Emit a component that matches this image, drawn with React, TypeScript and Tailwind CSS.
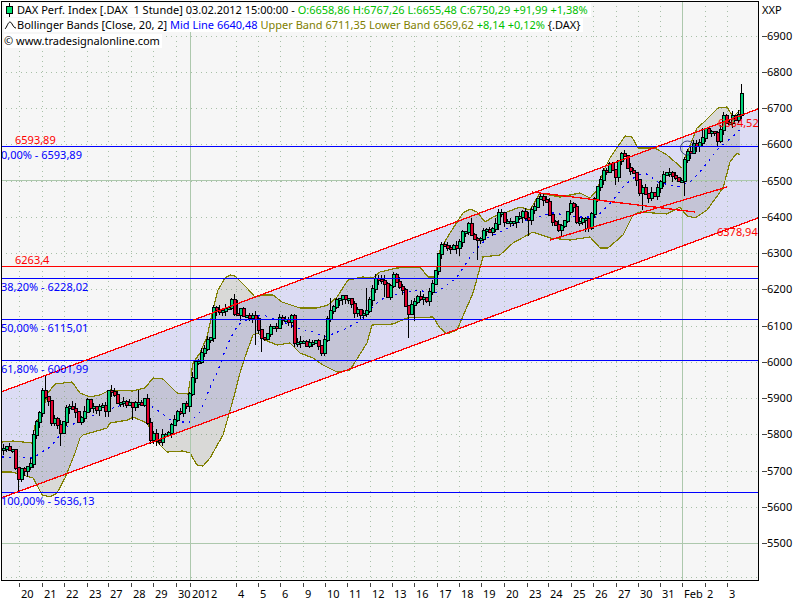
type Pt = [number, number];

const LEFT = 1;
const RIGHT = 758;
const TOP = 1;
const BOTTOM = 580;

// closes read off the chart, in pixels
const CLOSES: Pt[] = [
  [3, 450], [8, 448], [12, 447], [15, 467], [17, 478], [19, 483], [22, 467], [27, 465], [30, 462], [33, 437], [35, 425],
  [38, 420], [42, 392], [45, 398], [48, 403], [51, 420], [55, 422], [59, 432], [62, 433], [64, 420], [67, 405], [70, 412],
  [75, 413], [78, 418], [83, 417], [86, 397], [88, 407], [93, 408], [100, 410], [107, 407], [108, 393], [113, 393], [117, 400],
  [125, 400], [132, 410], [137, 400], [145, 402], [147, 420], [149, 440], [153, 438], [160, 438], [167, 437], [171, 428],
  [175, 412], [180, 412], [185, 403], [188, 400], [191, 383], [193, 365], [198, 360], [200, 352], [205, 347], [210, 335],
  [213, 312], [218, 307], [223, 315], [230, 302], [235, 312], [240, 312], [245, 318], [250, 313], [257, 320], [258, 333],
  [263, 338], [268, 337], [271, 323], [277, 328], [280, 315], [287, 317], [292, 320], [295, 350], [300, 342], [308, 345],
  [315, 340], [321, 357], [327, 320], [330, 307], [338, 300], [350, 300], [355, 313], [363, 312], [368, 307], [373, 283],
  [378, 276], [383, 285], [388, 300], [393, 277], [398, 287], [403, 292], [407, 317], [413, 300], [422, 302], [428, 300],
  [432, 285], [438, 253], [442, 243], [447, 245], [452, 250], [457, 245], [463, 230], [468, 228], [473, 242], [482, 233],
  [485, 228], [492, 228], [497, 218], [502, 213], [505, 223], [513, 225], [518, 213], [523, 213], [527, 223], [532, 210],
  [535, 203], [542, 197], [547, 202], [550, 223], [557, 232], [563, 228], [568, 212], [572, 202], [577, 223], [583, 222],
  [588, 225], [592, 210], [595, 190], [598, 180], [600, 177], [605, 173], [610, 163], [615, 177], [620, 156], [623, 157],
  [628, 170], [632, 177], [635, 175], [638, 192], [645, 192], [650, 197], [659, 187], [663, 175], [670, 178], [675, 177],
  [678, 182], [682, 185], [684, 163], [688, 150], [693, 147], [700, 143], [702, 137], [706, 132], [712, 137], [717, 137],
  [720, 128], [723, 118], [728, 125], [733, 117], [737, 123], [740, 90],
];

const UPPER: Pt[] = [
  [2, 442], [13, 441], [32, 443], [35, 425], [42, 412], [48, 393], [55, 384], [72, 382], [80, 393], [90, 397], [100, 395],
  [110, 390], [133, 391], [145, 388], [153, 378], [163, 379], [177, 393], [188, 394], [193, 363], [200, 353], [207, 337],
  [213, 310], [218, 290], [225, 278], [230, 275], [235, 276], [247, 288], [255, 297], [265, 295], [273, 295], [282, 302],
  [300, 308], [317, 308], [328, 305], [337, 297], [348, 280], [363, 277], [373, 278], [380, 272], [397, 268], [420, 267],
  [428, 277], [435, 277], [440, 250], [450, 233], [463, 213], [470, 209], [477, 212], [485, 222], [493, 217], [507, 212],
  [520, 207], [530, 210], [540, 193], [560, 197], [580, 193], [590, 198], [597, 190], [603, 172], [610, 158], [625, 136],
  [632, 137], [638, 148], [655, 148], [667, 155], [682, 168], [683, 163], [697, 128], [703, 123], [718, 108], [727, 107],
  [733, 117], [740, 110],
];

const LOWER: Pt[] = [
  [2, 472], [12, 472], [33, 478], [37, 485], [42, 495], [50, 497], [57, 493], [65, 478], [75, 453], [80, 438], [83, 435],
  [107, 428], [110, 423], [128, 420], [133, 417], [147, 423], [158, 443], [167, 452], [183, 451], [190, 453], [197, 465],
  [203, 466], [210, 458], [223, 435], [233, 400], [240, 373], [245, 357], [253, 335], [258, 333], [265, 340], [277, 345],
  [290, 343], [300, 353], [313, 358], [323, 365], [337, 372], [350, 370], [367, 343], [372, 325], [393, 324], [407, 318],
  [433, 317], [440, 328], [447, 334], [457, 330], [473, 293], [483, 257], [500, 255], [513, 243], [533, 232], [550, 238],
  [570, 240], [590, 237], [600, 248], [608, 248], [623, 235], [633, 215], [640, 212], [653, 213], [667, 214], [680, 207],
  [687, 216], [695, 218], [707, 210], [723, 188], [730, 162], [737, 153], [740, 155],
];

const MID: Pt[] = [
  [2, 457], [33, 458], [50, 447], [67, 427], [87, 418], [107, 410], [128, 403], [147, 403], [160, 412], [173, 422], [190, 422],
  [200, 412], [210, 388], [217, 373], [228, 343], [238, 325], [250, 318], [263, 315], [278, 320], [297, 328], [313, 332],
  [325, 337], [343, 330], [358, 322], [380, 300], [400, 293], [420, 290], [432, 295], [447, 285], [457, 277], [473, 253],
  [487, 238], [500, 232], [520, 222], [537, 217], [553, 213], [577, 217], [597, 217], [613, 200], [623, 187], [637, 175],
  [647, 174], [658, 182], [677, 187], [690, 182], [700, 172], [717, 150], [740, 130],
];

// long wicks that stand out in the picture: x, y of the tip
const WICKS: Pt[] = [
  [19, 492], [46, 375], [60, 446], [99, 416], [131, 420], [137, 390], [155, 446], [191, 372], [237, 300], [256, 345],
  [262, 352], [330, 298], [366, 288], [383, 297], [409, 338], [414, 321], [437, 265], [459, 256], [476, 260], [481, 243],
  [527, 236], [560, 236], [584, 232], [595, 198], [615, 185], [642, 210], [684, 196], [703, 128], [740, 84],
];

function at(points: Pt[], x: number) {
  for (let i = 1; i < points.length; i++) {
    if (x <= points[i][0]) {
      const [x0, y0] = points[i - 1];
      const [x1, y1] = points[i];
      return y0 + ((y1 - y0) * (x - x0)) / (x1 - x0 || 1);
    }
  }
  return points[points.length - 1][1];
}

const noise = (i: number) => {
  const v = Math.sin(i * 12.9898 + 4.1) * 43758.5453;
  return v - Math.floor(v);
};

type Candle = { x: number; top: number; bottom: number; high: number; low: number; up: boolean };

function buildCandles(): Candle[] {
  const out: Candle[] = [];
  let prev = CLOSES[0][1];
  for (let i = 0; i < 247; i++) {
    const xf = 3 + i * 3;
    const close = Math.round(at(CLOSES, xf) + (noise(i) - 0.5) * 9);
    const top = Math.min(prev, close);
    const bottom = Math.max(prev, close);
    let high = top - Math.round(noise(i + 500) * 6);
    let low = bottom + Math.round(noise(i + 900) * 6);
    for (const [wx, wy] of WICKS) {
      if (Math.abs(wx - xf) < 1.6) {
        if (wy < top) high = Math.min(high, wy);
        else low = Math.max(low, wy);
      }
    }
    out.push({ x: xf, top, bottom: Math.max(bottom, top + 1), high, low, up: close <= prev });
    prev = close;
  }
  return out;
}

const candles = buildCandles();

const pts = (list: Pt[]) => list.map(([x, y]) => `${x},${y}`).join(" ");
const yOf = (p: number) => Math.round(543 - (p - 5500) * 0.3624);

const PRICES = [6900, 6800, 6700, 6600, 6500, 6400, 6300, 6200, 6100, 6000, 5900, 5800, 5700, 5600, 5500];

const DAY_TICKS: [number, string][] = [
  [19, "20"], [42, "21"], [64, "22"], [87, "23"], [108, "27"], [131, "28"], [153, "29"], [176, "30"], [190, "2012"],
  [236, "4"], [258, "5"], [280, "6"], [303, "9"], [325, "10"], [347, "11"], [370, "12"], [392, "13"], [414, "16"],
  [437, "17"], [459, "18"], [481, "19"], [504, "20"], [527, "23"], [548, "24"], [571, "25"], [593, "26"], [616, "27"],
  [638, "30"], [660, "31"], [682, "Feb"], [705, "2"], [727, "3"],
];

const FIB_LINES: { y: number; label: string; labelY: number }[] = [
  { y: 146, label: "0,00% - 6593,89", labelY: 154 },
  { y: 278, label: "38,20% - 6228,02", labelY: 286 },
  { y: 319, label: "50,00% - 6115,01", labelY: 327 },
  { y: 360, label: "61,80% - 6001,99", labelY: 368 },
  { y: 492, label: "100,00% - 5636,13", labelY: 500 },
];

const GRID = "#adc8ad";
const DOT = "#a8c0a8";
const RED = "#ff0000";

function Chart() {
  return (
    <svg width={800} height={600} className="block">
      <rect x={LEFT} y={TOP} width={RIGHT - LEFT} height={BOTTOM - TOP} fill="#f6f6f6" />

      {/* regression channel */}
      <polygon points={`${LEFT},392 ${RIGHT},109 ${RIGHT},218 ${LEFT},498`} fill="#dcdcf4" />

      {/* dotted grid */}
      <g shapeRendering="crispEdges">
        {PRICES.map((p) => (
          <line key={p} x1={LEFT} x2={RIGHT} y1={yOf(p) + 0.5} y2={yOf(p) + 0.5} stroke={DOT} strokeDasharray="1 4" />
        ))}
        <line x1={LEFT} x2={RIGHT} y1={577.5} y2={577.5} stroke={DOT} strokeDasharray="1 4" />
        {DAY_TICKS.map(([x]) => (
          <line key={x} x1={x + 0.5} x2={x + 0.5} y1={TOP} y2={BOTTOM} stroke={DOT} strokeDasharray="1 4" />
        ))}
      </g>

      {/* bollinger bands */}
      <polygon points={`${pts(UPPER)} ${pts([...LOWER].reverse())}`} fill="#5a5a50" fillOpacity={0.18} />
      <g shapeRendering="crispEdges">
        <polyline points={pts(UPPER)} fill="none" stroke="#808000" strokeWidth={1.2} />
        <polyline points={pts(LOWER)} fill="none" stroke="#808000" strokeWidth={1.2} />

        {/* solid grid */}
        <line x1={LEFT} x2={RIGHT} y1={180.5} y2={180.5} stroke={GRID} />
        <line x1={LEFT} x2={RIGHT} y1={543.5} y2={543.5} stroke={GRID} />
        <line x1={190.5} x2={190.5} y1={TOP} y2={BOTTOM} stroke={GRID} />
        <line x1={682.5} x2={682.5} y1={TOP} y2={BOTTOM} stroke={GRID} />

        <polyline points={pts(MID)} fill="none" stroke="#0000ff" strokeWidth={1.2} strokeDasharray="2 5" />
      </g>

      <text x={717} y={231} dominantBaseline="central" fill={RED} className="text-[11px]">6378,94</text>

      {/* candles */}
      <g shapeRendering="crispEdges">
        {candles.map((c, i) => (
          <g key={i}>
            <rect x={c.x} y={c.high} width={1} height={c.low - c.high} fill="#000" />
            <rect x={c.x - 1} y={c.top - 1} width={4} height={c.bottom - c.top + 2} fill="#000" />
            <rect x={c.x} y={c.top} width={2} height={c.bottom - c.top} fill={c.up ? "#00d27a" : "#e0002c"} />
          </g>
        ))}
      </g>

      <text x={718} y={122} dominantBaseline="central" fill={RED} className="text-[11px]">6664,52</text>

      {/* horizontal levels */}
      <g shapeRendering="crispEdges">
        {FIB_LINES.map((f) => (
          <line key={f.y} x1={LEFT} x2={RIGHT} y1={f.y + 0.5} y2={f.y + 0.5} stroke="#0000ff" />
        ))}
        <line x1={LEFT} x2={RIGHT} y1={266.5} y2={266.5} stroke={RED} />

        {/* channel and trend lines */}
        <line x1={LEFT} y1={392} x2={RIGHT} y2={109} stroke={RED} strokeWidth={1.3} />
        <line x1={LEFT} y1={498} x2={RIGHT} y2={218} stroke={RED} strokeWidth={1.3} />
        <line x1={532} y1={192} x2={695} y2={212} stroke={RED} strokeWidth={1.3} />
        <line x1={550} y1={240} x2={727} y2={187} stroke={RED} strokeWidth={1.3} />
      </g>
      <ellipse cx={687.5} cy={148} rx={7} ry={7} fill="none" stroke="#20206a" strokeWidth={0.8} />

      {/* labels on the levels */}
      {FIB_LINES.map((f) => (
        <text key={f.label} x={1} y={f.labelY} dominantBaseline="central" fill="#0000ff" className="text-[11px]">
          {f.label}
        </text>
      ))}
      <text x={15} y={139} dominantBaseline="central" fill={RED} className="text-[11px]">6593,89</text>
      <text x={15} y={259} dominantBaseline="central" fill={RED} className="text-[11px]">6263,4</text>

      {/* frame */}
      <rect x={0} y={0} width={800} height={1} fill="#fff" />
      <rect x={0} y={0} width={1} height={600} fill="#fff" />
      <path d={`M${LEFT + 0.5} ${BOTTOM + 0.5} V${TOP + 0.5} H${RIGHT + 0.5} V${BOTTOM + 0.5} Z`} fill="none" stroke="#000" shapeRendering="crispEdges" />

      {/* price axis */}
      <text x={762} y={9} dominantBaseline="central" fill="#000" className="text-[11px]">XXP</text>
      {PRICES.map((p) => (
        <g key={p}>
          <line x1={762} x2={767} y1={yOf(p) + 0.5} y2={yOf(p) + 0.5} stroke="#444" shapeRendering="crispEdges" />
          <text x={767} y={yOf(p) - 1} dominantBaseline="central" fill="#000" className="text-[11px]">{p}</text>
        </g>
      ))}

      {/* time axis */}
      {DAY_TICKS.map(([x, label]) => (
        <g key={x}>
          <line x1={x + 0.5} x2={x + 0.5} y1={583} y2={587} stroke="#444" shapeRendering="crispEdges" />
          <text x={x + 2} y={593} dominantBaseline="central" fill="#000" className="text-[11px]">{label}</text>
        </g>
      ))}
    </svg>
  );
}

function Legend() {
  return (
    <div className="absolute left-[4px] top-[3px] flex flex-col items-start text-[11px] leading-[14px] whitespace-pre">
      <div className="flex h-[14px] items-center bg-white pr-[3px]">
        <svg width={13} height={14} className="shrink-0">
          <rect x={5} y={0} width={1} height={14} fill="#000" />
          <rect x={2.5} y={3.5} width={6} height={7} fill="#00e070" stroke="#000" />
        </svg>
        <span className="text-black">DAX Perf. Index [.DAX  1 Stunde] 03.02.2012 15:00:00 - </span>
        <span className="text-[#00c000]">O:6658,86 H:6767,26 L:6655,48 C:6750,29 +91,99 +1,38%</span>
      </div>
      <div className="mt-px flex h-[14px] items-center bg-white pr-[3px]">
        <svg width={13} height={14} className="shrink-0">
          <path d="M1 11 C3 9 4 4 6 4 C8 4 9 10 12 10" fill="none" stroke="#000" />
        </svg>
        <span className="text-black">Bollinger Bands [Close, 20, 2] </span>
        <span className="text-[#0000ff]">Mid Line 6640,48 </span>
        <span className="text-[#808000]">Upper Band 6711,35 Lower Band 6569,62 </span>
        <span className="text-[#00c000]">+8,14 +0,12% </span>
        <span className="text-black">{"{.DAX}"}</span>
      </div>
      <div className="mt-[2px] flex h-[14px] items-center bg-white pr-[2px]">
        <span className="text-black">© www.tradesignalonline.com</span>
      </div>
    </div>
  );
}

export default function App() {
  return (
    <div className="relative h-[600px] w-[800px] overflow-hidden bg-white font-['Noto_Sans',sans-serif] text-[11px]">
      <Chart />
      <Legend />
    </div>
  );
}
